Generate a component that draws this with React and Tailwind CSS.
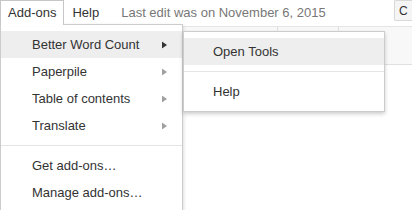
import React from 'react';

const mainItems = [
  { label: 'Better Word Count', sub: true, active: true },
  { label: 'Paperpile', sub: true },
  { label: 'Table of contents', sub: true },
  { label: 'Translate', sub: true },
];

const Arrow = () => (
  <svg width="5" height="7" viewBox="0 0 5 7" className="absolute right-[15px] top-1/2 -translate-y-1/2">
    <path d="M0 0 L5 3.5 L0 7 Z" fill="currentColor" />
  </svg>
);

function MenuRow({ label, sub, active }) {
  return (
    <div
      className={`relative h-[27px] flex items-center pl-[31px] pr-8 text-[#333] ${active ? 'bg-[#eeeeee]' : ''}`}
    >
      <span>{label}</span>
      {sub && (
        <span className={active ? 'text-[#333]' : 'text-[#a0a0a0]'}>
          <Arrow />
        </span>
      )}
    </div>
  );
}

export default function App() {
  return (
    <div className="relative w-[412px] h-[210px] overflow-hidden bg-white text-[13px] font-['Liberation_Sans',Arial,sans-serif]">
      {/* menu bar */}
      <div className="flex items-start h-[27px] border-b border-[#e5e5e5]">
        <div className="h-[25px] px-[7px] flex items-center border border-b-0 border-[#c6c6c6] bg-white text-[#333] z-20">
          Add-ons
        </div>
        <div className="h-[25px] px-[8px] flex items-center text-[#333]">Help</div>
        <div className="h-[25px] pl-[14px] flex items-center text-[#777]">Last edit was on November 6, 2015</div>
        <div className="ml-auto h-[21px] w-[18px] border border-r-0 border-[#d9d9d9] bg-[#f5f5f5] rounded-l-[2px] flex items-center pl-[4px] text-[#333] text-[12px]">
          C
        </div>
      </div>

      {/* toolbar behind */}
      <div className="h-[38px] bg-[#f8f8f8] border-b border-[#e0e0e0] flex">
        <div className="w-[277px]" />
        <div className="w-[61px] border-l border-[#e0e0e0]" />
        <div className="border-l border-[#e0e0e0] flex-1" />
      </div>

      {/* main dropdown */}
      <div className="absolute left-0 top-[24px] w-[183px] h-[200px] bg-white border border-[#cccccc] shadow-[0_2px_4px_rgba(0,0,0,0.2)] pt-[6px] z-10">
        {mainItems.map((it) => (
          <MenuRow key={it.label} {...it} />
        ))}
        <div className="my-[6px] border-t border-[#e5e5e5]" />
        <MenuRow label="Get add-ons…" />
        <MenuRow label="Manage add-ons…" />
      </div>

      {/* submenu */}
      <div className="absolute left-[183px] top-[31px] w-[202px] bg-white border border-[#cccccc] shadow-[0_2px_4px_rgba(0,0,0,0.2)] py-[6px] z-20">
        <div className="h-[27px] flex items-center pl-[29px] bg-[#eeeeee] text-[#333]">Open Tools</div>
        <div className="my-[6px] border-t border-[#e5e5e5]" />
        <div className="h-[27px] flex items-center pl-[29px] text-[#333]">Help</div>
      </div>
    </div>
  );
}
